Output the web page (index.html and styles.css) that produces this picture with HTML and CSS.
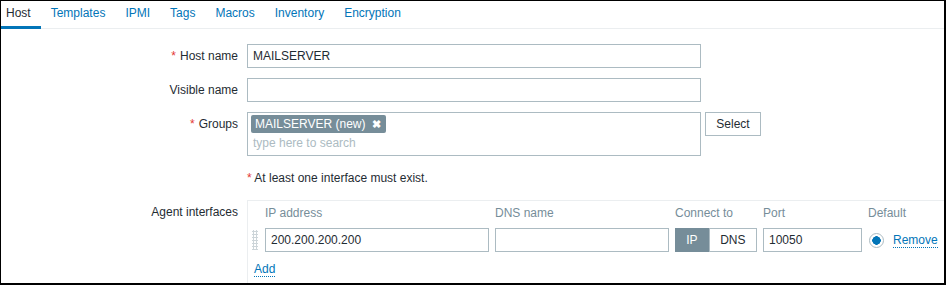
FILE: index.html
```html
<!DOCTYPE html>
<html lang="en">
<head>
  <meta charset="UTF-8" />
  <title>Host</title>
  <link rel="stylesheet" href="styles.css">
</head>
<body>

  <div class="frame">
    <!-- Tabs -->
    <ul class="tabs">
      <li class="active"><a>Host</a></li>
      <li><a>Templates</a></li>
      <li><a>IPMI</a></li>
      <li><a>Tags</a></li>
      <li><a>Macros</a></li>
      <li><a>Inventory</a></li>
      <li><a>Encryption</a></li>
    </ul>

    <!-- Host form -->
    <div class="form-grid">
      <label class="form-label required">Host name</label>
      <div class="form-field">
        <input type="text" class="text-input wide" value="MAILSERVER" />
      </div>

      <label class="form-label">Visible name</label>
      <div class="form-field">
        <input type="text" class="text-input wide" value="" />
      </div>

      <label class="form-label required">Groups</label>
      <div class="form-field groups-field">
        <div class="multiselect">
          <span class="chip">MAILSERVER (new) <span class="chip-x">&#10006;</span></span>
          <span class="ms-placeholder">type here to search</span>
        </div>
        <button class="btn-select">Select</button>
      </div>

      <div></div>
      <div class="form-field error-line"><span class="star">*</span> At least one interface must exist.</div>

      <label class="form-label">Agent interfaces</label>
      <div class="iface-box">
        <div class="iface-grid">
          <span></span>
          <span class="col-head">IP address</span>
          <span class="col-head">DNS name</span>
          <span class="col-head">Connect to</span>
          <span class="col-head">Port</span>
          <span class="col-head">Default</span>

          <span class="drag-handle"></span>
          <input type="text" class="text-input" value="200.200.200.200" />
          <input type="text" class="text-input" value="" />
          <div class="toggle">
            <span class="toggle-opt on">IP</span>
            <span class="toggle-opt">DNS</span>
          </div>
          <input type="text" class="text-input" value="10050" />
          <div class="default-cell">
            <span class="radio"></span>
            <a class="link">Remove</a>
          </div>
        </div>
        <a class="link add-link">Add</a>
      </div>
    </div>
  </div>

</body>
</html>
```

FILE: styles.css
```css
/* Page frame (screenshot has a dark edge) */
body {
  margin: 0;
  padding: 0;
  font-family: 'Liberation Sans', Arial, sans-serif;
  font-size: 12px;
  color: #1f2c33;
  background: #fff;
}

.frame {
  box-sizing: border-box;
  width: 946px;
  height: 285px;
  border-style: solid;
  border-color: #000;
  border-width: 1px 2px 2px 1px;
  overflow: hidden;
  background: #fff;
}

/* Tabs */
.tabs {
  list-style: none;
  margin: 0 0 0 -5px;
  padding: 0;
  display: flex;
  border-bottom: 1px solid #ebeef0;
}

.tabs li a {
  display: block;
  padding: 1px 10px 1px;
  line-height: 23px;
  color: #0275b8;
  border-bottom: 3px solid transparent;
  margin-bottom: -1px;
}

.tabs li.active a {
  color: #1f2c33;
  border-bottom-color: #0275b8;
}

/* Form layout */
.form-grid {
  display: grid;
  grid-template-columns: 237px 1fr;
  column-gap: 9px;
  row-gap: 10px;
  padding-top: 15px;
}

.form-label {
  text-align: right;
  line-height: 24px;
  align-self: start;
}

.form-label.required::before {
  content: '*';
  color: #e33734;
  margin-right: 4px;
}

.star {
  color: #e33734;
}

.form-field {
  display: flex;
  align-items: flex-start;
}

.text-input {
  box-sizing: border-box;
  height: 24px;
  border: 1px solid #acbbc2;
  background: #fff;
  padding: 0 5px;
  font-family: inherit;
  font-size: 12px;
  color: #1f2c33;
  outline: none;
  margin: 0;
  min-width: 0;
}

.text-input.wide {
  width: 454px;
}

/* Groups multiselect */
.groups-field {
  gap: 4px;
}

.multiselect {
  box-sizing: border-box;
  width: 454px;
  height: 44px;
  border: 1px solid #acbbc2;
  padding: 2px 3px;
}

.chip {
  display: inline-block;
  background: #768d99;
  color: #fff;
  line-height: 18px;
  padding: 0 5px 0 4px;
  border-radius: 2px;
}

.chip-x {
  font-size: 11px;
  font-weight: bold;
  margin-left: 3px;
}

.ms-placeholder {
  display: block;
  color: #acbbc2;
  line-height: 18px;
  margin-top: 1px;
  padding-left: 2px;
}

.btn-select {
  box-sizing: border-box;
  height: 24px;
  width: 56px;
  border: 1px solid #acbbc2;
  background: #fff;
  font-family: inherit;
  font-size: 12px;
  color: #1f2c33;
  padding: 0;
}

.error-line {
  line-height: 24px;
  display: block;
}

/* Agent interfaces */
.iface-box {
  width: 720px;
  height: 90px;
  border-top: 1px solid #ebeef0;
  border-left: 1px solid #ebeef0;
  padding: 3px 0 0 4px;
}

.iface-grid {
  display: grid;
  grid-template-columns: 7px 224px 174px 82px 99px auto;
  column-gap: 6px;
  row-gap: 6px;
  align-items: center;
}

.col-head {
  color: #768d99;
  line-height: 18px;
}

.drag-handle {
  width: 6px;
  height: 20px;
  background-image: radial-gradient(circle, #cdd5d9 1px, transparent 1.2px);
  background-size: 3px 3px;
}

.toggle {
  display: flex;
  height: 24px;
  box-sizing: border-box;
}

.toggle-opt {
  box-sizing: border-box;
  height: 24px;
  line-height: 22px;
  text-align: center;
  border: 1px solid #acbbc2;
  background: #fff;
  width: 49px;
}

.toggle-opt.on {
  width: 34px;
  background: #768d99;
  border-color: #768d99;
  color: #fff;
}

.default-cell {
  display: flex;
  align-items: center;
  gap: 9px;
  padding-left: 1px;
}

.radio {
  box-sizing: border-box;
  width: 15px;
  height: 15px;
  border: 1px solid #acbbc2;
  border-radius: 50%;
  background: radial-gradient(circle, #0275b8 4px, #fff 4.5px);
}

.link {
  color: #0275b8;
  border-bottom: 1px dotted #0275b8;
  line-height: 14px;
}

.add-link {
  display: inline-block;
  margin: 10px 0 0 2px;
}
```
